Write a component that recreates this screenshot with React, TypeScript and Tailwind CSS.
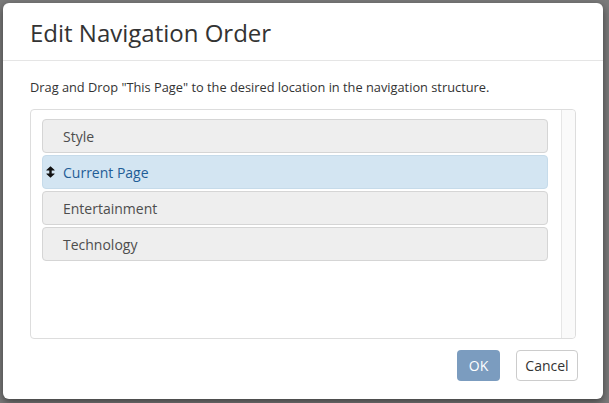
const items = [
  { label: 'Style', current: false },
  { label: 'Current Page', current: true },
  { label: 'Entertainment', current: false },
  { label: 'Technology', current: false },
];

function SortIcon() {
  return (
    <svg width="9" height="12" viewBox="0 0 9 12" className="absolute left-[3px] top-1/2 -translate-y-1/2">
      <path
        d="M4.5 0.2 L8.6 4 Q8.9 4.5 8.3 4.5 L5.7 4.5 L5.7 7.5 L8.3 7.5 Q8.9 7.5 8.6 8 L4.5 11.8 L0.4 8 Q0.1 7.5 0.7 7.5 L3.3 7.5 L3.3 4.5 L0.7 4.5 Q0.1 4.5 0.4 4 Z"
        fill="#111"
      />
    </svg>
  );
}

export default function App() {
  return (
    <div className="h-[403px] w-full overflow-hidden bg-[#7b7b7b] pl-[3px] pt-[3px] font-['Open_Sans',sans-serif]">
      <div className="flex h-[396px] w-[600px] flex-col rounded-[6px] bg-white shadow-[0_3px_9px_rgba(0,0,0,0.5)]">
        <div className="flex h-[58px] items-center border-b border-[#e5e5e5] px-[27px] pt-[3px]">
          <h1 className="text-[24px] leading-none text-[#333]">Edit Navigation Order</h1>
        </div>
        <div className="flex flex-1 flex-col px-[27px] pt-[16px]">
          <p className="text-[12.8px] leading-[20px] text-[#333]">
            Drag and Drop "This Page" to the desired location in the navigation structure.
          </p>
          <div className="mt-[12px] flex h-[230px] w-[546px] rounded-[4px] border border-[#dddddd]">
            <div className="flex flex-1 flex-col gap-[2px] pl-[11px] pr-[13px] pt-[9px]">
              {items.map((it) => (
                <div
                  key={it.label}
                  className={
                    it.current
                      ? 'relative flex h-[34px] items-center rounded-[4px] border border-[#c6dbea] bg-[#d3e5f2] pl-[20px] text-[14px] text-[#1f5d96]'
                      : 'relative flex h-[34px] items-center rounded-[4px] border border-[#d5d5d5] bg-[#eeeeee] pl-[20px] text-[14px] text-[#4d4d4d]'
                  }
                >
                  {it.current && <SortIcon />}
                  {it.label}
                </div>
              ))}
            </div>
            <div className="w-[14px] rounded-r-[4px] border-l border-[#e6e6e6] bg-[#fafafa]" />
          </div>
          <div className="mt-[11px] flex justify-end gap-[16px]">
            <button className="h-[31px] w-[43px] rounded-[4px] bg-[#7b9cbf] text-[14px] text-white">OK</button>
            <button className="mr-[-2px] h-[31px] w-[62px] rounded-[4px] border border-[#cccccc] bg-white text-[14px] text-[#333]">
              Cancel
            </button>
          </div>
        </div>
      </div>
    </div>
  );
}
